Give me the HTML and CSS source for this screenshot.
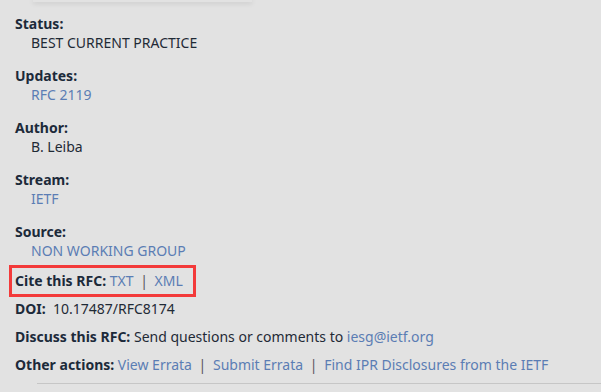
FILE: index.html
```html
<!DOCTYPE html>
<html lang="en">
<head>
    <meta charset="UTF-8">
    <meta name="viewport" content="width=device-width, initial-scale=1.0">
    <title>RFC 8174 - Info</title>
    <link rel="stylesheet" href="styles.css">
</head>
<body>
    <div class="top-card"></div>
    <div class="info">
        <dl class="meta">
            <dt>Status:</dt>
            <dd>BEST CURRENT PRACTICE</dd>
            <dt>Updates:</dt>
            <dd><a href="#">RFC 2119</a></dd>
            <dt>Author:</dt>
            <dd>B. Leiba</dd>
            <dt>Stream:</dt>
            <dd><a href="#">IETF</a></dd>
            <dt>Source:</dt>
            <dd><a href="#">NON WORKING GROUP</a></dd>
        </dl>

        <div class="cite-box">
            <p class="line"><b>Cite this RFC:</b> <a href="#">TXT</a> <span class="sep">|</span> <a href="#">XML</a></p>
        </div>
        <p class="line"><b>DOI:</b>&nbsp; 10.17487/RFC8174</p>
        <p class="line"><b>Discuss this RFC:</b> Send questions or comments to <a href="#">iesg@ietf.org</a></p>
        <p class="line"><b>Other actions:</b> <a href="#">View Errata</a> <span class="sep">|</span> <a href="#">Submit Errata</a> <span class="sep">|</span> <a href="#">Find IPR Disclosures from the IETF</a></p>
    </div>
    <hr class="rule">
</body>
</html>
```

FILE: styles.css
```css
/* General Reset */
body, html {
    margin: 0;
    padding: 0;
    background-color: #e2e2e2;
    font-family: "Noto Sans", "Open Sans", sans-serif;
    font-size: 14px;
    line-height: 19px;
    color: #1f2a36;
    overflow: hidden;
}

a {
    color: #5b7db4;
    text-decoration: none;
}

/* bottom of the card above, scrolled mostly out of view */
.top-card {
    width: 219px;
    height: 2px;
    margin-left: 33px;
    background-color: #e2e2e2;
    box-shadow: 0 1px 5px rgba(0, 0, 0, 0.18);
}

.info {
    padding: 12px 0 0 15px;
}

/* Metadata list */
.meta {
    margin: 0;
}

.meta dt {
    font-weight: bold;
    color: #1c2a3a;
}

.meta dd {
    margin: 0 0 14px 16px;
    color: #1f2a36;
}

.meta dd:last-child {
    margin-bottom: 5px;
}

.line {
    margin: 0 0 9px 0;
}

.line b {
    color: #1c2a3a;
}

.sep {
    color: #5a5560;
    margin: 0 3px;
}

/* Highlighted citation row */
.cite-box {
    display: inline-block;
    margin: 0 0 2px -6px;
    padding: 3px 10px 4px 3px;
    border: 3px solid #f33a3a;
}

.cite-box .line {
    margin: 0;
}

.rule {
    margin: 4px 0 0 37px;
    border: 0;
    border-top: 1px solid #c6c6c6;
}
```
